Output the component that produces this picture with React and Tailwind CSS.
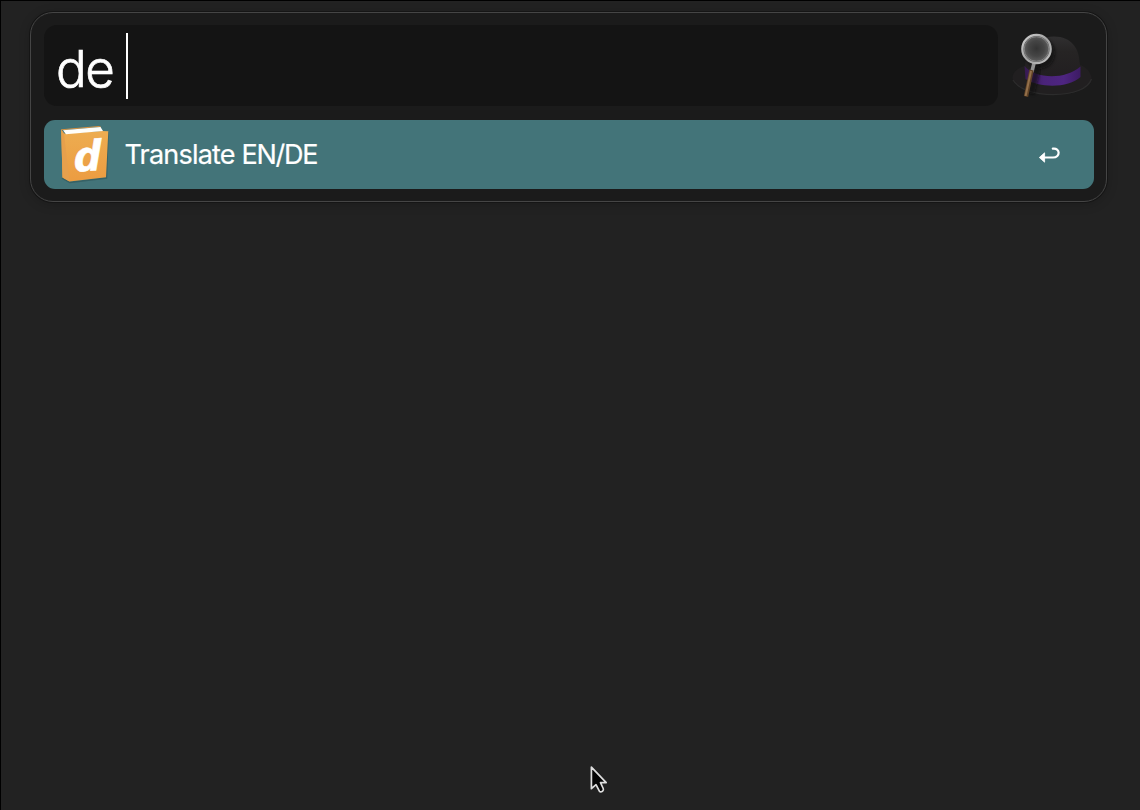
import React from "react";

function HatIcon() {
  return (
    <svg width="84" height="72" viewBox="1010 30 84 72" className="block">
      <defs>
        <linearGradient id="crown" x1="0" y1="0" x2="0" y2="1">
          <stop offset="0" stopColor="#302f30" />
          <stop offset="0.35" stopColor="#262424" />
          <stop offset="1" stopColor="#211e20" />
        </linearGradient>
        <linearGradient id="band" x1="0" y1="0" x2="1" y2="0">
          <stop offset="0" stopColor="#371951" />
          <stop offset="0.35" stopColor="#4a2379" />
          <stop offset="0.7" stopColor="#4e2581" />
          <stop offset="1" stopColor="#3c1b62" />
        </linearGradient>
        <radialGradient id="lens" cx="0.5" cy="0.48" r="0.55">
          <stop offset="0" stopColor="#343434" />
          <stop offset="0.5" stopColor="#454545" />
          <stop offset="1" stopColor="#6c6c6c" />
        </radialGradient>
        <linearGradient id="rim" x1="0" y1="0" x2="1" y2="1">
          <stop offset="0" stopColor="#d2d2d2" />
          <stop offset="0.5" stopColor="#a2a2a2" />
          <stop offset="1" stopColor="#c2c2c2" />
        </linearGradient>
        <filter id="soft" x="-30%" y="-30%" width="160%" height="160%">
          <feGaussianBlur stdDeviation="1.8" />
        </filter>
      </defs>
      <path d="M1024 66C1015 69 1011 75 1013 80C1017 89 1034 95 1053 95C1073 95 1090 89 1091.500 80C1092 75 1089 69 1081 65Z" fill="#211f20" />
      <path d="M1013 80C1018 89 1034 94.600 1053 94.600C1073 94.600 1088 89 1091.500 79" fill="none" stroke="#2c2c2c" strokeWidth="1.200" />
      <path d="M1025 70C1025 54 1031 37 1054 36.500C1072 36.500 1079 49 1079.500 62L1081 71C1070 82 1038 83 1025 74Z" fill="url(#crown)" />
      <path d="M1024.500 66C1034 78.500 1065 80.500 1080.500 66.500V77C1069 88 1040 88.500 1025.500 79Z" fill="url(#band)" />
      <ellipse cx="1040" cy="53" rx="15" ry="16" fill="#080808" opacity="0.6" filter="url(#soft)" />
      <path d="M1038 66L1031 94" stroke="#080808" strokeWidth="7" opacity="0.6" filter="url(#soft)" />
      <path d="M1034.300 62L1031.800 72" stroke="#929292" strokeWidth="3.600" />
      <path d="M1031.500 70L1026 96.500" stroke="#614326" strokeWidth="4.400" />
      <path d="M1031 71L1025.600 96" stroke="#93704b" strokeWidth="2" />
      <circle cx="1036.500" cy="49" r="14.200" fill="url(#lens)" stroke="url(#rim)" strokeWidth="2.200" />
      <circle cx="1036.500" cy="49" r="12.300" fill="none" stroke="#858585" strokeWidth="0.900" />
    </svg>
  );
}

function BookIcon() {
  return (
    <svg width="52" height="60" viewBox="58 124 52 60" className="relative -top-px block">
      <defs>
        <linearGradient id="cover" x1="0" y1="0" x2="0" y2="1">
          <stop offset="0" stopColor="#edad51" />
          <stop offset="1" stopColor="#ec9c41" />
        </linearGradient>
      </defs>
      <path d="M62 178L70 182.500L106.500 178L108 132" fill="none" stroke="#2e5558" strokeWidth="1.500" opacity="0.6" />
      <path d="M61.200 129.500L64 133.500L102 131L108.300 131.200L106 177.300L69.500 181.500L62.500 177.500Z" fill="url(#cover)" />
      <path d="M61.200 129.500L64 133.500L69.500 181.500L62.500 177.500Z" fill="#e7a04c" />
      <path d="M61.200 129.800L99 126.500L101 127.300" fill="none" stroke="#d99342" strokeWidth="1" />
      <path d="M63 130.300L100.500 127.100L103 131L66 134.200Z" fill="#fffefa" />
      <text
        x="0"
        y="0"
        transform="translate(73.700 172) rotate(-4) scale(1.150 1)"
        fill="#ffffff"
        stroke="#ffffff"
        strokeWidth="0.500"
        className="font-['Open_Sans',sans-serif] text-[42px] font-bold italic"
      >
        d
      </text>
    </svg>
  );
}

function ReturnIcon() {
  return (
    <svg width="22" height="18" viewBox="1038 146 22 18" className="block">
      <path d="M1052.800 148.700C1060.300 147.500 1060.800 157.500 1053 157.500H1044" fill="none" stroke="#ffffff" strokeWidth="2.200" strokeLinecap="round" />
      <path d="M1039.300 157.500L1044.600 152.800V162.200Z" fill="#ffffff" stroke="#ffffff" strokeWidth="0.800" strokeLinejoin="round" />
    </svg>
  );
}

function Pointer() {
  return (
    <svg width="20" height="30" viewBox="589 765 20 30" className="absolute left-[588px] top-[764px]">
      <path d="M591.400 767.200V788.700L596 784.700L599.400 791.200Q600.400 792.300 602.500 791.300Q604 790.200 603.200 788.500L600.500 782.600H606.200Z" fill="#050505" stroke="#dedede" strokeWidth="1.700" strokeLinejoin="round" />
    </svg>
  );
}

export default function App() {
  return (
    <div className="relative h-[810px] w-[1140px] overflow-hidden border-l border-t border-black bg-[#222222] pl-[29px] pr-[33px] pt-[11px] font-['Inter',sans-serif] text-white">
      <main className="flex h-[190px] flex-col gap-[14px] rounded-[23px] border border-[#454545] bg-[#1b1b1b] px-[12.5px] py-[12px] shadow-[0_0_0_1px_#151515,0_2px_12px_rgba(0,0,0,0.2)]">
        <div className="flex h-[81px] shrink-0 items-center justify-between">
          <div className="flex h-full w-[954px] items-center rounded-[13px] bg-[#141414] pl-[12px]">
            <span className="relative left-[0.5px] top-[3px] w-[70px] text-[51px] font-light leading-none tracking-[-1.5px] [-webkit-text-stroke:0.7px_white]">de</span>
            <span className="h-[66px] w-[2px] bg-white" />
          </div>
          <HatIcon />
        </div>
        <div className="flex h-[69px] shrink-0 items-center rounded-[11px] bg-[#437479] pl-[14px] pr-[34px]">
          <BookIcon />
          <span className="ml-[15px] whitespace-nowrap text-[27px] leading-none tracking-[-0.8px] [-webkit-text-stroke:0.2px_white]">
            Translate <span className="tracking-[-1.3px]">EN/DE</span>
          </span>
          <div className="ml-auto">
            <ReturnIcon />
          </div>
        </div>
      </main>
      <Pointer />
    </div>
  );
}
